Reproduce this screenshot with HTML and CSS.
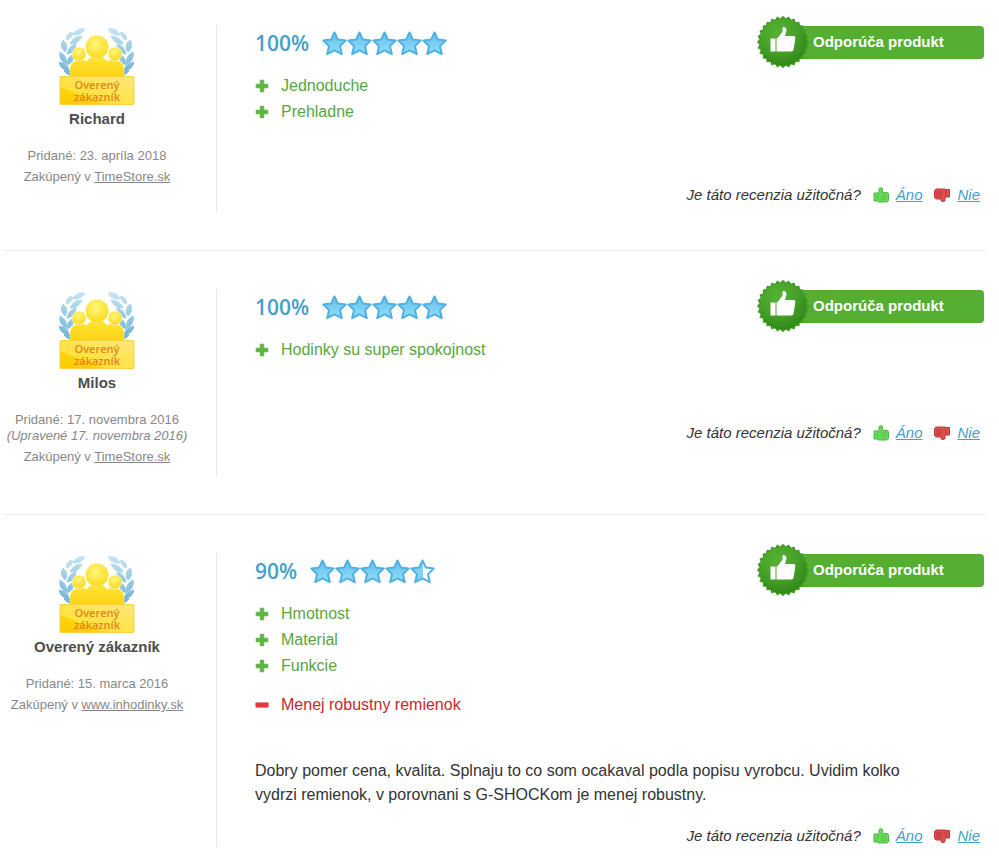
FILE: index.html
```
<!DOCTYPE html>
<html lang="sk">
<head>
    <meta charset="utf-8">
    <title>Recenzie</title>
    <link rel="stylesheet" href="styles.css">
</head>
<body>

<!-- Shared icons -->
<svg class="sprite" aria-hidden="true">
    <defs>
        <linearGradient id="star-fill" x1="0" y1="0" x2="0" y2="1">
            <stop offset="0" stop-color="#66bdea"/>
            <stop offset="1" stop-color="#8fe0fb"/>
        </linearGradient>
        <linearGradient id="half-fill" x1="0" y1="0" x2="1" y2="0">
            <stop offset="0.5" stop-color="#7fd2f5"/>
            <stop offset="0.5" stop-color="#ffffff"/>
        </linearGradient>
        <radialGradient id="seal-fill" cx="0.38" cy="0.3" r="0.75">
            <stop offset="0" stop-color="#55b232"/>
            <stop offset="0.5" stop-color="#48a22a"/>
            <stop offset="1" stop-color="#2f8717"/>
        </radialGradient>
        <linearGradient id="people-fill" x1="0" y1="0" x2="0" y2="1">
            <stop offset="0" stop-color="#ffe63a"/>
            <stop offset="1" stop-color="#fdd010"/>
        </linearGradient>
        <radialGradient id="head-fill" cx="0.45" cy="0.35" r="0.65">
            <stop offset="0" stop-color="#fff67a"/>
            <stop offset="1" stop-color="#fcd91c"/>
        </radialGradient>
        <linearGradient id="plate-fill" x1="0" y1="1" x2="1" y2="0">
            <stop offset="0" stop-color="#ffc800"/>
            <stop offset="0.3" stop-color="#ffd40c"/>
            <stop offset="0.32" stop-color="#ffe23c"/>
            <stop offset="1" stop-color="#ffe67a"/>
        </linearGradient>
        <linearGradient id="leaf-fill" gradientUnits="userSpaceOnUse" x1="0" y1="0" x2="0" y2="50">
            <stop offset="0" stop-color="#c9e4f3"/>
            <stop offset="0.5" stop-color="#94c8e3"/>
            <stop offset="1" stop-color="#6cb0d4"/>
        </linearGradient>
    </defs>

    <symbol id="star" viewBox="0 0 25 25">
        <path d="M12.500 1.500 L15.900 8.600 L23.700 9.600 L18 15.100 L19.800 23.200 L12.500 19.400 L5.200 23.200 L7 15.100 L1.300 9.600 L9.100 8.600 Z" fill="url(#star-fill)" stroke="#4fb0e2" stroke-width="2" stroke-linejoin="round"/>
    </symbol>
    <symbol id="star-half" viewBox="0 0 25 25">
        <path d="M12.500 1.500 L15.900 8.600 L23.700 9.600 L18 15.100 L19.800 23.200 L12.500 19.400 L5.200 23.200 L7 15.100 L1.300 9.600 L9.100 8.600 Z" fill="url(#half-fill)" stroke="#4fb0e2" stroke-width="2" stroke-linejoin="round"/>
    </symbol>

    <symbol id="plus" viewBox="0 0 14 14">
        <path d="M5 1h4v4h4v4h-4v4h-4v-4h-4v-4h4z" fill="#5fb543" stroke="#7cc466" stroke-width="0.600" stroke-linejoin="round"/>
    </symbol>
    <symbol id="minus" viewBox="0 0 14 14">
        <rect x="0.500" y="4.500" width="13" height="5" rx="1" fill="#e5393d" stroke="#f07a7c" stroke-width="0.600"/>
    </symbol>

    <symbol id="thumb-up" viewBox="0 0 16 16">
        <path d="M1 6h3.500L6 4.500V2C6 .3 9.500 .3 9.500 2v3.500h5l1 1v7L14 15H5.500L4 14H1z" fill="#6ad65a" stroke="#4cbc42" stroke-linejoin="round"/>
        <path d="M4.500 7v6M8 8h6M8 10.200h6M8 12.400h5" stroke="#52c247" stroke-width="0.800" fill="none"/>
    </symbol>
    <symbol id="thumb-down" viewBox="0 0 16 16">
        <path d="M.5 3.500L2 2h9l1 .5h3.500v7.500H12l-1 1.500v2c0 1.300-4 1.300-4 0V12H2L.5 10.500z" fill="#da5050" stroke="#c43838" stroke-linejoin="round"/>
        <path d="M11.800 3.500v6M2 5h6M2 7.200h6M2 9.400h5" stroke="#bb3030" stroke-width="0.800" fill="none"/>
    </symbol>

    <!-- Seven rotated squares make the toothed edge -->
    <symbol id="seal" viewBox="-27 -27 54 54">
        <g fill="#409b24">
            <rect x="-18.500" y="-18.500" width="37" height="37" transform="rotate(6)"/>
            <rect x="-18.500" y="-18.500" width="37" height="37" transform="rotate(19)"/>
            <rect x="-18.500" y="-18.500" width="37" height="37" transform="rotate(32)"/>
            <rect x="-18.500" y="-18.500" width="37" height="37" transform="rotate(45)"/>
            <rect x="-18.500" y="-18.500" width="37" height="37" transform="rotate(58)"/>
            <rect x="-18.500" y="-18.500" width="37" height="37" transform="rotate(71)"/>
            <rect x="-18.500" y="-18.500" width="37" height="37" transform="rotate(84)"/>
        </g>
        <circle r="23.500" fill="url(#seal-fill)"/>
        <path d="M-12.500-3.500h5v13h-5zM-6.500-3.500L-4.500-5L-.5-10.500V-14c0-1.800 3.700-1.500 4 1.500c0 2-.8 4-1.500 6.500h8.500c1.500 0 2 1 1.800 2.500L10.500 7.500C10.200 9 9.500 9.500 8 9.500H-6.500z" fill="#fff"/>
    </symbol>

    <symbol id="laurel" viewBox="0 0 26 50">
        <g fill="url(#leaf-fill)" stroke="url(#leaf-fill)" stroke-linejoin="round">
            <path d="M26 1c-6-1-11 2-12 6c6 0 10-2 12-6z"/>
            <path d="M13 4c-4 1-6 4-5 8c4-2 6-5 5-8z"/>
            <path d="M23 8c-6 0-10 3-12 8c6 0 10-3 12-8z"/>
            <path d="M4 12c-3 4-2 8 2 12c3-5 2-9-2-12z"/>
            <path d="M17 16c-5 1-8 5-9 10c6-1 9-5 9-10z"/>
            <path d="M1 24c-1 5 1 9 6 12c1-6-1-9-6-12z"/>
            <path d="M14 27c-4 1-6 5-6 10c5-2 7-6 6-10z"/>
            <path d="M0 34c1 5 4 8 10 9c-1-6-5-8-10-9z"/>
            <path d="M5 43c3 4 7 5 13 5c-3-5-8-7-13-5z"/>
        </g>
    </symbol>

    <symbol id="verified" viewBox="0 0 76 80">
        <use href="#laurel" x="0" y="1" width="26" height="50"/>
        <use href="#laurel" width="26" height="50" transform="translate(75 1) scale(-1 1)"/>
        <path d="M11 51V44c0-8 4-11 10-11c4 0 6 0 7 1c3-4 6-5 10-5c5 0 8 2 10 5c2-1 3-1 7-1c6 0 10 3 10 11v7z" fill="url(#people-fill)" stroke="#fff0a0" stroke-width="0.500"/>
        <circle cx="20" cy="27" r="7" fill="url(#head-fill)" stroke="#fff" stroke-width="0.500"/>
        <circle cx="56" cy="27" r="7" fill="url(#head-fill)" stroke="#fff" stroke-width="0.500"/>
        <circle cx="38" cy="20" r="11.500" fill="url(#head-fill)" stroke="#fff3a0" stroke-width="0.500"/>
        <rect x="1" y="49.500" width="74" height="28" rx="1" fill="url(#plate-fill)" stroke="#f8cf45"/>
    </symbol>
</svg>

<main class="reviews">

    <article class="review">
        <aside class="author">
            <div class="author-badge">
                <svg aria-hidden="true"><use href="#verified"/></svg>
                <span>Overený<br>zákazník</span>
            </div>
            <strong class="author-name">Richard</strong>
            <p class="date">Pridané: 23. apríla 2018</p>
            <p class="shop">Zakúpený v <a href="#">TimeStore.sk</a></p>
        </aside>
        <div class="content">
            <header class="review-head">
                <span class="percent">100%</span>
                <span class="stars">
                    <svg><use href="#star"/></svg>
                    <svg><use href="#star"/></svg>
                    <svg><use href="#star"/></svg>
                    <svg><use href="#star"/></svg>
                    <svg><use href="#star"/></svg>
                </span>
                <div class="recommend">
                    <svg class="seal" aria-hidden="true"><use href="#seal"/></svg>
                    Odporúča produkt
                </div>
            </header>
            <div class="points">
                <ul class="pros">
                    <li><svg><use href="#plus"/></svg>Jednoduche</li>
                    <li><svg><use href="#plus"/></svg>Prehladne</li>
                </ul>
            </div>
            <div class="vote">
                <span>Je táto recenzia užitočná?</span>
                <svg><use href="#thumb-up"/></svg>
                <a href="#">Áno</a>
                <svg><use href="#thumb-down"/></svg>
                <a href="#">Nie</a>
            </div>
        </div>
    </article>

    <article class="review">
        <aside class="author">
            <div class="author-badge">
                <svg aria-hidden="true"><use href="#verified"/></svg>
                <span>Overený<br>zákazník</span>
            </div>
            <strong class="author-name">Milos</strong>
            <p class="date">Pridané: 17. novembra 2016<br><em>(Upravené 17. novembra 2016)</em></p>
            <p class="shop">Zakúpený v <a href="#">TimeStore.sk</a></p>
        </aside>
        <div class="content">
            <header class="review-head">
                <span class="percent">100%</span>
                <span class="stars">
                    <svg><use href="#star"/></svg>
                    <svg><use href="#star"/></svg>
                    <svg><use href="#star"/></svg>
                    <svg><use href="#star"/></svg>
                    <svg><use href="#star"/></svg>
                </span>
                <div class="recommend">
                    <svg class="seal" aria-hidden="true"><use href="#seal"/></svg>
                    Odporúča produkt
                </div>
            </header>
            <div class="points">
                <ul class="pros">
                    <li><svg><use href="#plus"/></svg>Hodinky su super spokojnost</li>
                </ul>
            </div>
            <div class="vote">
                <span>Je táto recenzia užitočná?</span>
                <svg><use href="#thumb-up"/></svg>
                <a href="#">Áno</a>
                <svg><use href="#thumb-down"/></svg>
                <a href="#">Nie</a>
            </div>
        </div>
    </article>

    <article class="review">
        <aside class="author">
            <div class="author-badge">
                <svg aria-hidden="true"><use href="#verified"/></svg>
                <span>Overený<br>zákazník</span>
            </div>
            <strong class="author-name">Overený zákazník</strong>
            <p class="date">Pridané: 15. marca 2016</p>
            <p class="shop">Zakúpený v <a href="#">www.inhodinky.sk</a></p>
        </aside>
        <div class="content">
            <header class="review-head">
                <span class="percent">90%</span>
                <span class="stars">
                    <svg><use href="#star"/></svg>
                    <svg><use href="#star"/></svg>
                    <svg><use href="#star"/></svg>
                    <svg><use href="#star"/></svg>
                    <svg><use href="#star-half"/></svg>
                </span>
                <div class="recommend">
                    <svg class="seal" aria-hidden="true"><use href="#seal"/></svg>
                    Odporúča produkt
                </div>
            </header>
            <div class="points">
                <ul class="pros">
                    <li><svg><use href="#plus"/></svg>Hmotnost</li>
                    <li><svg><use href="#plus"/></svg>Material</li>
                    <li><svg><use href="#plus"/></svg>Funkcie</li>
                </ul>
                <ul class="cons">
                    <li><svg><use href="#minus"/></svg>Menej robustny remienok</li>
                </ul>
            </div>
            <p class="review-text">Dobry pomer cena, kvalita. Splnaju to co som ocakaval podla popisu vyrobcu. Uvidim kolko vydrzi remienok, v porovnani s G-SHOCKom je menej robustny.</p>
            <div class="vote">
                <span>Je táto recenzia užitočná?</span>
                <svg><use href="#thumb-up"/></svg>
                <a href="#">Áno</a>
                <svg><use href="#thumb-down"/></svg>
                <a href="#">Nie</a>
            </div>
        </div>
    </article>

</main>

</body>
</html>
```
FILE: styles.css
```
* {
    box-sizing: border-box;
}

body {
    margin: 0;
    background: #fff;
    color: #333;
    font-family: "Liberation Sans", Arial, sans-serif;
    font-size: 16px;
}

p, ul {
    margin: 0;
    padding: 0;
}

ul {
    list-style: none;
}

.sprite {
    position: absolute;
    width: 0;
    height: 0;
}

/* Reviews */

.reviews {
    padding: 25px 14px 0 4px;
}

.review {
    display: flex;
    min-height: 187px;
}

.review + .review {
    margin-top: 38px;
    padding-top: 38px;
    border-top: 1px solid #ececec;
}

/* Author */

.author {
    display: flex;
    flex-direction: column;
    flex: none;
    align-items: center;
    width: 213px;
    min-height: 187px;
    padding: 2px 26px 0 0;
    border-right: 1px solid #e8e8e8;
    color: #888;
    font-size: 13px;
    line-height: 16px;
    text-align: center;
    white-space: nowrap;
}

.author-badge {
    position: relative;
    width: 76px;
    height: 80px;
}

.author-badge svg {
    display: block;
    width: 76px;
    height: 80px;
}

/* Label on the yellow plate */
.author-badge span {
    position: absolute;
    right: 0;
    bottom: 4px;
    left: 0;
    color: #e8831a;
    font-family: "Open Sans", sans-serif;
    font-size: 11px;
    font-weight: 600;
    line-height: 12px;
}

.author-name {
    margin: 3px 0 20px;
    color: #4d4d4d;
    font-size: 15px;
    line-height: 18px;
}

.shop {
    margin-top: 5px;
}

.shop a {
    color: #888;
}

/* Review content */

.content {
    display: flex;
    flex: 1;
    flex-direction: column;
    padding-left: 38px;
}

.review-head {
    display: flex;
    align-items: center;
    height: 36px;
    margin-bottom: 12px;
}

.percent {
    margin-right: 13px;
    color: #43a0cb;
    font-family: "Open Sans", sans-serif;
    font-size: 21px;
    font-weight: 600;
}

.stars {
    display: flex;
}

.stars svg {
    width: 25px;
    height: 25px;
}

.recommend {
    position: relative;
    width: 202px;
    height: 33px;
    margin: 0 1px 2px auto;
    padding-left: 31px;
    border-radius: 4px;
    background: #53ae31;
    color: #fff;
    font-size: 15px;
    font-weight: bold;
    line-height: 31px;
}

.seal {
    position: absolute;
    top: -11px;
    left: -26px;
    width: 54px;
    height: 54px;
}

.points {
    margin-bottom: 41px;
    line-height: 26px;
}

.points li {
    display: flex;
    align-items: center;
}

.points svg {
    width: 14px;
    height: 14px;
    margin-right: 12px;
}

.pros {
    color: #57a63f;
}

.cons {
    margin-top: 13px;
    color: #c4292e;
}

.review-text {
    padding-right: 40px;
    line-height: 24px;
}

.vote {
    display: flex;
    align-items: center;
    justify-content: flex-end;
    margin-top: 18px;
    padding-right: 5px;
    font-size: 15px;
    font-style: italic;
    line-height: 22px;
}

.vote svg {
    width: 16px;
    height: 16px;
    margin: 0 7px 0 12px;
}

.vote a {
    color: #43a0cb;
}
```
